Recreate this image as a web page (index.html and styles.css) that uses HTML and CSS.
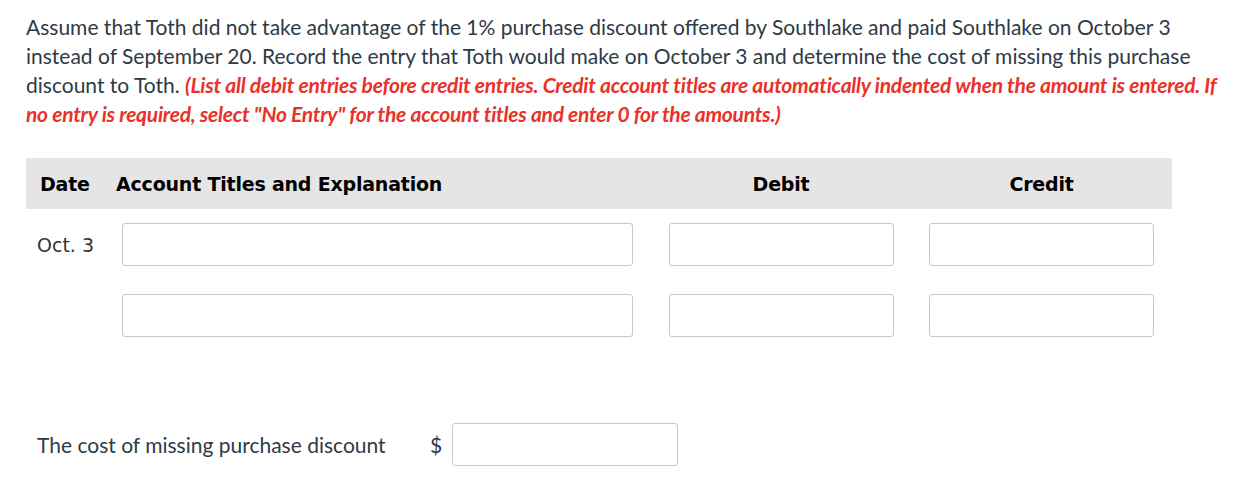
FILE: index.html
```html
<!DOCTYPE html>
<html>
<head>
<meta charset="utf-8">
<link rel="stylesheet" href="styles.css">
</head>
<body>
<p class="prompt">Assume that Toth did not take advantage of the 1% purchase discount offered by Southlake and paid Southlake on October 3 instead of September 20. Record the entry that Toth would make on October 3 and determine the cost of missing this purchase discount to Toth. <em class="note">(List all debit entries before credit entries. Credit account titles are automatically indented when the amount is entered. If no entry is required, select "No Entry" for the account titles and enter 0 for the amounts.)</em></p>

<div class="journal">
  <div class="head">
    <div class="h-date">Date</div>
    <div class="h-acct">Account Titles and Explanation</div>
    <div class="h-num">Debit</div>
    <div class="h-num">Credit</div>
  </div>
  <div class="row">
    <div class="date">Oct. 3</div>
    <div class="acct"><input class="box" type="text"></div>
    <input class="box" type="text">
    <input class="box" type="text">
  </div>
  <div class="row">
    <div class="date"></div>
    <div class="acct"><input class="box" type="text"></div>
    <input class="box" type="text">
    <input class="box" type="text">
  </div>
</div>

<div class="cost">
  <span class="cost-label">The cost of missing purchase discount</span>
  <span class="dollar">$</span>
  <input class="box cost-box" type="text">
</div>
</body>
</html>
```
FILE: styles.css
```css
html, body {
  margin: 0;
  padding: 0;
  background: #fff;
}
body {
  width: 1244px;
  height: 494px;
  overflow: hidden;
  font-family: Lato, "Open Sans", sans-serif;
  color: #2e3a45;
}
.prompt {
  margin: 12px 0 0 26px;
  width: 1205px;
  font-size: 21px;
  line-height: 29px;
}
.note {
  color: #e8322a;
  font-weight: bold;
  font-style: italic;
  letter-spacing: -0.25px;
}
.journal {
  margin: 30px 0 0 26px;
  width: 1146px;
}
.head, .row {
  display: grid;
  grid-template-columns: 54.5px 517px 225px 225px;
  column-gap: 35.5px;
}
.head {
  height: 51px;
  align-items: center;
  background: #e5e5e5;
  font-family: "DejaVu Sans", Verdana, sans-serif;
  font-weight: bold;
  font-size: 19px;
  letter-spacing: -0.2px;
  color: #000;
}
.h-date { padding-left: 14px; }
.h-num { text-align: center; }
.row {
  margin-top: 14px;
  align-items: center;
}
.row + .row { margin-top: 28px; }
.date {
  padding-left: 11px;
  font-family: "DejaVu Sans", Verdana, sans-serif;
  font-size: 19px;
  color: #333;
  white-space: nowrap;
}
.acct { padding-left: 6px; }
.acct .box { width: 100%; }
.box {
  box-sizing: border-box;
  height: 43px;
  width: 225px;
  margin: 0;
  border: 1px solid #c8c8c8;
  border-radius: 3px;
  background: #fff;
}
.cost {
  margin: 86px 0 0 37px;
  display: flex;
  align-items: center;
}
.cost-label {
  font-size: 21px;
  width: 393px;
}
.dollar {
  font-size: 21px;
  width: 22px;
}
.cost-box {
  width: 226px;
}
```
